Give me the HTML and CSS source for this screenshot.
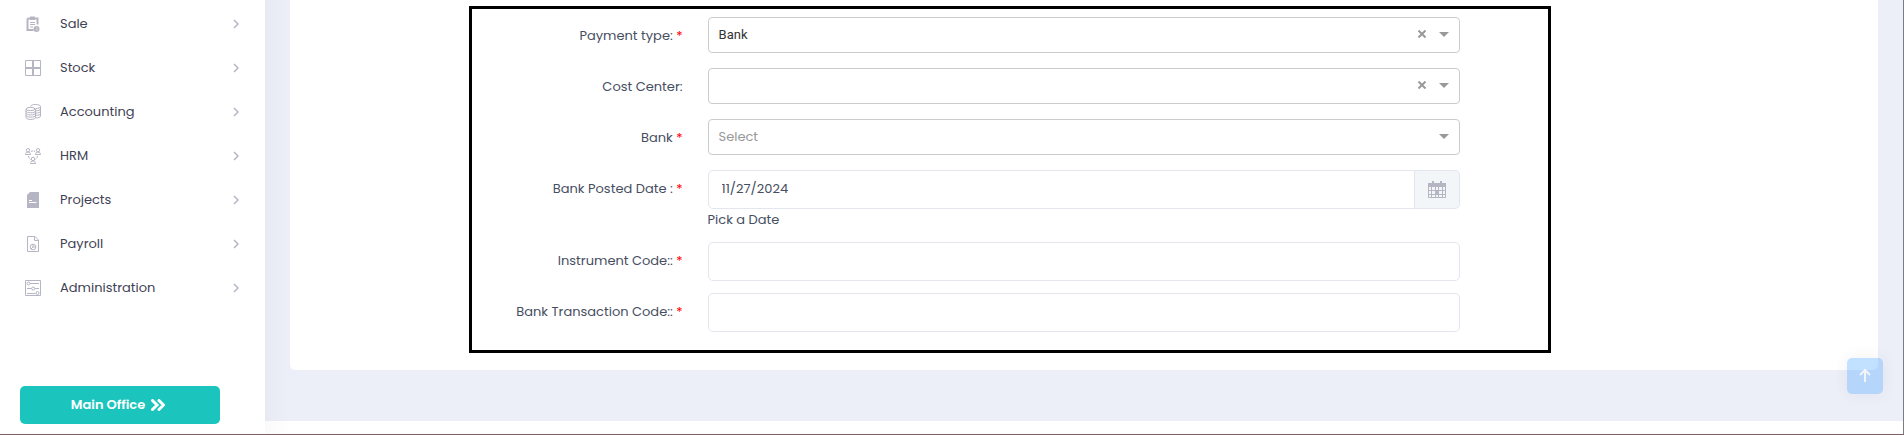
FILE: index.html
```html
<!DOCTYPE html>
<html lang="en">
<head>
<meta charset="utf-8">
<title>Payment</title>
<link rel="stylesheet" href="styles.css">
</head>
<body>
<div class="page">
  <aside class="sidebar">
    <nav class="menu">
      <a class="menu-link" href="#">
        <svg class="menu-icon" viewBox="0 0 16 16"><path d="M2.500 2.500h10v6M2.500 2.500v11.500h6" fill="none" stroke="currentColor" stroke-width="2"/><path d="M5 0.500h5v3.500h-5z" fill="currentColor"/><path d="M5 6.500h5M5 8.500h5M5 11h3" stroke="currentColor"/><circle cx="11.500" cy="13" r="3" fill="currentColor"/><path d="M11 12h1.500M11 14h1.500" stroke="#fff" stroke-width=".6"/></svg>
        <span class="menu-text">Sale</span>
        <svg class="menu-arrow" viewBox="0 0 6 10"><path d="M1 1l4 4-4 4"/></svg>
      </a>
      <a class="menu-link" href="#">
        <svg class="menu-icon" viewBox="0 0 16 16"><path d="M.5.5h15v15H.5zM7.500.5v15M8.500.5v15M.5 7.500h15M.5 8.500h15" fill="none" stroke="currentColor"/></svg>
        <span class="menu-text">Stock</span>
        <svg class="menu-arrow" viewBox="0 0 6 10"><path d="M1 1l4 4-4 4"/></svg>
      </a>
      <a class="menu-link" href="#">
        <svg class="menu-icon" viewBox="0 0 16 16" fill="none" stroke="currentColor"><ellipse cx="5.500" cy="5" rx="4.500" ry="1.600"/><path d="M5.500 2.600C6 1 8 .5 10.500.5s5 .7 5 2-2 2-5 2M15.500 2.500v9.500c0 1-2 2-5 2M15.500 5c0 1-2 1.800-5 1.800M15.500 7.300c0 1-2 1.800-5 1.800M15.500 9.600c0 1-2 1.800-5 1.800M1 5v8.500c0 1 2 2 4.700 2s4.800-1 4.800-2V5M1 7c0 1 2 1.800 4.700 1.800S10.500 8 10.500 7M1 9.200c0 1 2 1.800 4.700 1.800s4.800-.8 4.800-1.800M1 11.400c0 1 2 1.800 4.700 1.800s4.800-.8 4.800-1.800"/></svg>
        <span class="menu-text">Accounting</span>
        <svg class="menu-arrow" viewBox="0 0 6 10"><path d="M1 1l4 4-4 4"/></svg>
      </a>
      <a class="menu-link" href="#">
        <svg class="menu-icon" viewBox="0 0 16 16" fill="none" stroke="currentColor"><circle cx="3" cy="2.200" r="1.700"/><circle cx="13" cy="2.200" r="1.700"/><circle cx="8" cy="11" r="1.700"/><path d="M.5 6.500c0-1.500 1-2.500 2.500-2.500s2.500 1 2.500 2.500zM10.500 6.500c0-1.500 1-2.500 2.500-2.500s2.500 1 2.500 2.500zM5.500 15.500c0-1.500 1-2.500 2.500-2.500s2.500 1 2.500 2.500z"/><path d="M6 3.500c1.500-.8 2.500-.8 4 0M3.500 8c.2 1.500.8 2.500 2 3.500M12.500 8c-.2 1.500-.8 2.500-2 3.500" stroke-dasharray="2 .8"/></svg>
        <span class="menu-text">HRM</span>
        <svg class="menu-arrow" viewBox="0 0 6 10"><path d="M1 1l4 4-4 4"/></svg>
      </a>
      <a class="menu-link" href="#">
        <svg class="menu-icon" viewBox="0 0 16 16"><path d="M5 0h9v16H2V3z" fill="currentColor"/><path d="M4 8.500h3M4 10.500h7.500" stroke="#fff"/></svg>
        <span class="menu-text">Projects</span>
        <svg class="menu-arrow" viewBox="0 0 6 10"><path d="M1 1l4 4-4 4"/></svg>
      </a>
      <a class="menu-link" href="#">
        <svg class="menu-icon" viewBox="0 0 16 16" fill="none" stroke="currentColor"><path d="M2.500.5H10L13.500 4v11.500h-11zM9.500.5v4h4"/><circle cx="8" cy="11" r="2.800"/><path d="M8 8.200V11h2.800M8 11l-2 2"/></svg>
        <span class="menu-text">Payroll</span>
        <svg class="menu-arrow" viewBox="0 0 6 10"><path d="M1 1l4 4-4 4"/></svg>
      </a>
      <a class="menu-link" href="#">
        <svg class="menu-icon" viewBox="0 0 16 16" fill="none" stroke="currentColor"><path d="M.5.5h15v15H.5z"/><path d="M5 3.500h9M2 8.500h4.500M10 8.500h4M2 13.500h8.500"/><circle cx="3.500" cy="3.500" r="1.500"/><circle cx="8.200" cy="8.500" r="1.500"/><circle cx="12.500" cy="13" r="1.500"/></svg>
        <span class="menu-text">Administration</span>
        <svg class="menu-arrow" viewBox="0 0 6 10"><path d="M1 1l4 4-4 4"/></svg>
      </a>
    </nav>
    <button class="office" type="button">Main Office
      <svg class="office-icon" viewBox="0 0 14 12"><path d="M1.500 1.500L6 6l-4.500 4.500M8 1.500L12.500 6 8 10.500"/></svg>
    </button>
  </aside>

  <main class="content">
    <section class="card">
      <form class="payment">
        <div class="row">
          <label class="label" for="type">Payment type: <span class="required">*</span></label>
          <div class="picker">
            <select class="select" id="type"><option>Bank</option></select>
            <button class="clear" type="button" aria-label="Clear payment type"><svg class="clear-icon" viewBox="0 0 8 8"><path d="M.5.5l7 7M7.500.5l-7 7"/></svg></button>
            <svg class="caret" viewBox="0 0 10 5"><path d="M0 0h10L5 5z"/></svg>
          </div>
        </div>
        <div class="row">
          <label class="label" for="center">Cost Center:</label>
          <div class="picker">
            <select class="select" id="center"><option></option></select>
            <button class="clear" type="button" aria-label="Clear cost center"><svg class="clear-icon" viewBox="0 0 8 8"><path d="M.5.5l7 7M7.500.5l-7 7"/></svg></button>
            <svg class="caret" viewBox="0 0 10 5"><path d="M0 0h10L5 5z"/></svg>
          </div>
        </div>
        <div class="row">
          <label class="label" for="bank">Bank <span class="required">*</span></label>
          <div class="picker">
            <select class="select select-empty" id="bank"><option>Select</option></select>
            <svg class="caret" viewBox="0 0 10 5"><path d="M0 0h10L5 5z"/></svg>
          </div>
        </div>
        <div class="row">
          <label class="label" for="date">Bank Posted Date : <span class="required">*</span></label>
          <div>
            <div class="date">
              <input class="input date-input" id="date" type="text" value="11/27/2024">
              <button class="date-button" type="button" aria-label="Open calendar">
                <svg class="calendar" viewBox="0 0 18 17" fill="none" stroke="currentColor"><path d="M.5 3.500h17v13H.5z"/><path d="M0 2h18v4H0zM7 9h4v4H7z" fill="currentColor" stroke="none"/><path d="M5 0v4M13 0v4" stroke-width="2"/><path d="M0 9.500h18M0 13.500h18M3.500 6v10.500M7.500 6v10.500M10.500 6v10.500M14.500 6v10.500"/></svg>
              </button>
            </div>
            <div class="hint">Pick a Date</div>
          </div>
        </div>
        <div class="row">
          <label class="label" for="instrument">Instrument Code:: <span class="required">*</span></label>
          <input class="input" id="instrument" type="text">
        </div>
        <div class="row">
          <label class="label" for="transaction">Bank Transaction Code:: <span class="required">*</span></label>
          <input class="input" id="transaction" type="text">
        </div>
      </form>
    </section>
    <footer class="footer"></footer>
  </main>
</div>
<button class="to-top" type="button" aria-label="Scroll to top">
  <svg class="to-top-icon" viewBox="0 0 12 14"><path d="M6 13V2M1 6l5-5 5 5"/></svg>
</button>
</body>
</html>
```
FILE: styles.css
```css
* {
  box-sizing: border-box;
}

body {
  margin: 0;
  font-family: Poppins, "Open Sans", sans-serif;
  font-size: 13px;
  color: #464e5f;
  background: #fff;
}

button,
input,
select {
  font: inherit;
  color: inherit;
}

.page {
  display: flex;
  min-height: 100vh;
  border-right: 1px solid #7b7b84;
  border-bottom: 1px solid #805f63;
}

.sidebar {
  display: flex;
  flex-direction: column;
  justify-content: space-between;
  width: 265px;
  flex-shrink: 0;
  padding: 2px 20px 10px;
}

.menu-link {
  display: flex;
  align-items: center;
  height: 44px;
  padding: 0 6px 0 5px;
  color: #3f4254;
  text-decoration: none;
}

.menu-icon {
  width: 16px;
  height: 16px;
  margin-right: 19px;
  color: #b5b5c3;
}

.menu-text {
  flex: 1;
}

.menu-arrow {
  width: 6px;
  height: 10px;
  fill: none;
  stroke: #b5b5c3;
  stroke-width: 1.5;
}

.office {
  display: flex;
  align-items: center;
  justify-content: center;
  gap: 6px;
  width: 200px;
  height: 38px;
  padding: 0 10px 0 6px;
  border: 0;
  border-radius: 5px;
  background: #1bc5bd;
  color: #fff;
  font-weight: 600;
}

.office-icon {
  width: 14px;
  height: 12px;
  fill: none;
  stroke: #fff;
  stroke-width: 3;
  stroke-linecap: round;
}

.content {
  display: flex;
  flex: 1;
  flex-direction: column;
  justify-content: space-between;
  background: linear-gradient(90deg, #e8e9f3, #eceff8 25px);
}

.card {
  margin: 0 25px;
  padding: 6px 0 17px;
  border-radius: 0 0 5px 5px;
  background: #fff;
}

.payment {
  display: grid;
  gap: 12px;
  margin: 0 20.6% 0 11.3%;
  padding: 8px 88px 18px 0;
  border: 3px solid #000;
}

.row {
  display: grid;
  grid-template-columns: 210fr 752fr;
  column-gap: 25px;
  align-items: start;
}

.label {
  line-height: 38px;
  min-height: 39px;
  text-align: right;
}

.required {
  color: #f00;
}

.picker {
  position: relative;
  height: 36px;
}

.select {
  width: 100%;
  height: 36px;
  padding: 0 60px 2px 10px;
  border: 1px solid #ccc;
  border-radius: 4px;
  appearance: none;
  background: #fff;
  color: #333;
  font-family: Roboto, sans-serif;
}

.select-empty {
  color: #999;
  font-family: inherit;
}

.clear {
  position: absolute;
  top: 9px;
  right: 30px;
  width: 16px;
  height: 16px;
  padding: 4px;
  border: 0;
  background: none;
}

.clear-icon {
  display: block;
  width: 8px;
  height: 8px;
  stroke: #999;
  stroke-width: 2;
}

.caret {
  position: absolute;
  top: 15px;
  right: 11px;
  width: 10px;
  height: 5px;
  fill: #999;
  pointer-events: none;
}

.input {
  width: 100%;
  min-width: 0;
  height: 39px;
  padding: 0 13px 2px;
  border: 1px solid #e4e6ef;
  border-radius: 5px;
  background: #fff;
}

.date {
  display: flex;
}

.date-input {
  flex: 1;
  border-radius: 5px 0 0 5px;
}

.date-button {
  width: 45px;
  padding: 0;
  border: 1px solid #e4e6ef;
  border-left: 0;
  border-radius: 0 5px 5px 0;
  background: #f3f6f9;
  color: #b5b5c3;
}

.calendar {
  display: block;
  width: 18px;
  height: 17px;
  margin: 0 auto;
}

.hint {
  line-height: 21px;
}

.footer {
  height: 13px;
  background: linear-gradient(90deg, #fafafa, #fff 25px);
}

.to-top {
  position: fixed;
  right: 21px;
  bottom: 41px;
  display: flex;
  align-items: center;
  justify-content: center;
  width: 36px;
  height: 36px;
  border: 0;
  border-radius: 5px;
  background: #3699ff;
  box-shadow: 0 0 15px 1px rgba(69, 65, 78, 0.2);
  opacity: 0.3;
}

.to-top-icon {
  width: 12px;
  height: 14px;
  fill: none;
  stroke: #fff;
  stroke-width: 2;
}
```
